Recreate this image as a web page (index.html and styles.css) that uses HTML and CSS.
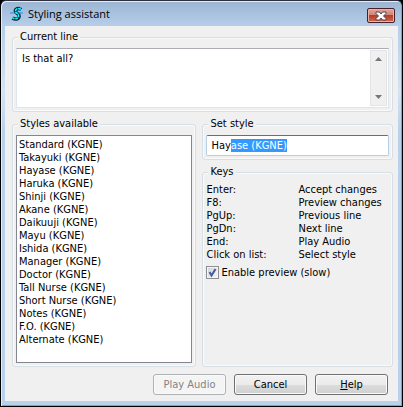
FILE: index.html
```html
<!DOCTYPE html>
<html lang="en">
<head>
<meta charset="utf-8">
<title>Styling assistant</title>
<link rel="stylesheet" href="styles.css">
</head>
<body>
<main class="window">
  <header class="titlebar">
    <svg class="app-icon" viewBox="0 0 16 16" aria-hidden="true">
      <path d="M12 3.500C10 1.500 6 3 6.500 5.500C7 8 10.500 7 10 10.500C9.500 13.500 6 13.500 3.500 12" fill="none" stroke="#06232e" stroke-width="3.600"/>
      <path d="M1 7H14M11.500 1V5" stroke="#1c8fe8"/>
      <path d="M11.500 3.500C10 1.500 6 3 6.500 5.500C7 8 10 7 9.500 10.500C9 13 6 13 3.500 12" fill="none" stroke="#18f0fa" stroke-width="1.600" stroke-dasharray="3 .6"/>
    </svg>
    <h1 class="title">Styling assistant</h1>
    <button class="close" type="button" aria-label="Close">
      <svg viewBox="0 0 12 10" aria-hidden="true">
        <path d="M1 1H4.500L6 3L7.500 1H11V2.500L8.500 5L11 7.500V9H7.500L6 7L4.500 9H1V7.500L3.500 5L1 2.500Z" fill="#fff" stroke="#4b4650"/>
      </svg>
    </button>
  </header>
  <form class="client">
    <fieldset class="group">
      <legend>Current line</legend>
      <div class="line-box">
        <textarea class="line-text" aria-label="Current line" readonly>Is that all?</textarea>
        <div class="scrollbar" aria-hidden="true">
          <svg viewBox="0 0 7 4"><path d="M3.500 0L7 4H0Z" fill="#777"/></svg>
          <svg viewBox="0 0 7 4"><path d="M0 0H7L3.500 4Z" fill="#777"/></svg>
        </div>
      </div>
    </fieldset>
    <div class="columns">
      <fieldset class="group styles">
        <legend>Styles available</legend>
        <select class="list" size="16" aria-label="Styles available">
          <option>Standard (KGNE)</option>
          <option>Takayuki (KGNE)</option>
          <option>Hayase (KGNE)</option>
          <option>Haruka (KGNE)</option>
          <option>Shinji (KGNE)</option>
          <option>Akane (KGNE)</option>
          <option>Daikuuji (KGNE)</option>
          <option>Mayu (KGNE)</option>
          <option>Ishida (KGNE)</option>
          <option>Manager (KGNE)</option>
          <option>Doctor (KGNE)</option>
          <option>Tall Nurse (KGNE)</option>
          <option>Short Nurse (KGNE)</option>
          <option>Notes (KGNE)</option>
          <option>F.O. (KGNE)</option>
          <option>Alternate (KGNE)</option>
        </select>
      </fieldset>
      <div class="side">
        <fieldset class="group">
          <legend>Set style</legend>
          <input class="style-input" id="style" type="text" value="Hayase (KGNE)" aria-label="Set style" spellcheck="false">
        </fieldset>
        <fieldset class="group keys">
          <legend>Keys</legend>
          <dl class="key-list">
            <dt>Enter:</dt><dd>Accept changes</dd>
            <dt>F8:</dt><dd>Preview changes</dd>
            <dt>PgUp:</dt><dd>Previous line</dd>
            <dt>PgDn:</dt><dd>Next line</dd>
            <dt>End:</dt><dd>Play Audio</dd>
            <dt>Click on list:</dt><dd>Select style</dd>
          </dl>
          <label class="preview"><span class="tick"><input type="checkbox" checked><svg viewBox="0 0 13 13" aria-hidden="true"><path d="M3.500 6L5.500 9.500L9.500 3" fill="none" stroke="#4658a0" stroke-width="2"/></svg></span>Enable preview (slow)</label>
        </fieldset>
      </div>
    </div>
    <div class="actions">
      <button class="btn" type="button" disabled>Play Audio</button>
      <button class="btn" type="button">Cancel</button>
      <button class="btn" type="button" accesskey="h"><u>H</u>elp</button>
    </div>
  </form>
</main>
<script src="script.js"></script>
</body>
</html>
```
FILE: styles.css
```css
* {
  box-sizing: border-box;
}

body {
  margin: 0;
  background: #000;
  color: #000;
  font: 11px/13px "DejaVu Sans Condensed", "DejaVu Sans", sans-serif;
}

input, select, textarea, button {
  font: inherit;
  color: inherit;
}

.window {
  display: flex;
  flex-direction: column;
  min-height: 100vh;
  padding: 0 4px 5px;
  border: 1px solid #000;
  border-top-color: #30303c;
  border-radius: 6px 6px 0 0;
  background: linear-gradient(#9bb5d3, #b6cee9 25px, #d5e3f3 90px, #b9d1ea 130px);
  box-shadow: inset 1px 1px #e2edf8, inset -1px -1px #35c3e4;
}

.titlebar {
  display: flex;
  align-items: center;
  height: 25px;
  padding: 0 3px 0 4px;
}

.app-icon {
  width: 16px;
  height: 16px;
}

.title {
  flex: 1;
  margin: 0 0 0 3px;
  font: 11px/16px "Open Sans", "Noto Sans", sans-serif;
}

.close {
  display: flex;
  align-items: center;
  justify-content: center;
  width: 28px;
  height: 15px;
  margin-top: 4px;
  padding: 0;
  border: 1px solid #48202a;
  border-radius: 2px;
  background: linear-gradient(#e5a59b, #d48373 45%, #b83c26 50%, #cc6a52);
  box-shadow: inset 0 0 0 1px #e9b3aa;
}

.close svg {
  width: 12px;
  height: 10px;
}

.client {
  display: flex;
  flex: 1;
  flex-direction: column;
  gap: 5px;
  padding: 4px 5px 6px 7px;
  background: #f0f0f0;
}

.group {
  min-width: 0;
  margin: 0;
  padding: 4px 3px 3px;
  border: 1px solid #d5dfe5;
  border-radius: 3px;
  box-shadow: inset 0 0 0 1px #fafafa;
}

.group legend {
  margin-left: 2px;
  padding: 0 2px;
  line-height: 14px;
  background: #f0f0f0;
}

.line-box {
  display: flex;
  height: 60px;
  padding: 1px;
  border: 1px solid #dfe5ec;
  border-top-color: #abadb3;
  background: #fff;
}

.line-text {
  flex: 1;
  min-width: 0;
  padding: 2px 4px;
  border: 0;
  outline: 0;
  resize: none;
  overflow: hidden;
  background: #fff;
}

.scrollbar {
  display: flex;
  flex-direction: column;
  align-items: center;
  justify-content: space-between;
  width: 17px;
  padding: 6px 0;
  border: 1px solid #e4e4e4;
  background: #f0f0f0;
}

.scrollbar svg {
  width: 7px;
  height: 4px;
}

.columns {
  display: grid;
  flex: 1;
  grid-template-columns: 184fr 190fr;
  gap: 6px;
}

.styles {
  display: flex;
}

.list {
  flex: 1;
  width: 100%;
  height: 100%;
  padding: 2px 1px;
  border: 1px solid #828790;
  border-radius: 0;
  outline: 0;
  overflow: hidden;
  background: #fff;
}

.list option {
  min-height: 0;
  padding: 0 1px;
  line-height: 13px;
}

.side {
  display: flex;
  flex-direction: column;
  gap: 5px;
}

.style-input {
  display: block;
  width: 100%;
  height: 21px;
  padding: 0 4px;
  border: 1px solid #b5cfe7;
  border-top-color: #3d7bad;
  border-radius: 2px;
  outline: 0;
  background: #fff;
}

.style-input::selection {
  background: #3399ff;
  color: #fff;
}

.keys {
  flex: 1;
}

.key-list {
  display: grid;
  grid-template-columns: 92px 1fr;
  margin: 0;
}

.key-list dd {
  margin: 0;
  white-space: nowrap;
}

.preview {
  display: flex;
  align-items: center;
  gap: 2px;
  margin-top: 5px;
}

.tick {
  display: grid;
  width: 13px;
  height: 13px;
}

.tick input, .tick svg {
  grid-area: 1 / 1;
  width: 13px;
  height: 13px;
  margin: 0;
}

.tick input {
  appearance: none;
  border: 1px solid #8e8f8f;
  background: linear-gradient(135deg, #cfd4da, #f6f6f6);
  box-shadow: inset 0 0 0 1px #f4f4f4;
}

.tick svg {
  pointer-events: none;
  visibility: hidden;
}

.tick input:checked + svg {
  visibility: visible;
}

.actions {
  display: flex;
  justify-content: flex-end;
  gap: 8px;
  margin-top: 2px;
  padding-right: 5px;
}

.btn {
  width: 73px;
  height: 21px;
  padding: 0;
  border: 1px solid #707070;
  border-radius: 3px;
  background: linear-gradient(#f2f2f2, #ebebeb 50%, #dddddd 50%, #cfcfcf);
  box-shadow: inset 0 0 0 1px #fafafa;
}

.btn:disabled {
  border-color: #adb2b5;
  background: #f4f4f4;
  color: #838383;
}
```
FILE: script.js
```js
const styleInput = document.getElementById("style");
styleInput.focus();
// Autocomplete: the part after the typed prefix stays selected.
styleInput.setSelectionRange(3, styleInput.value.length);
```
